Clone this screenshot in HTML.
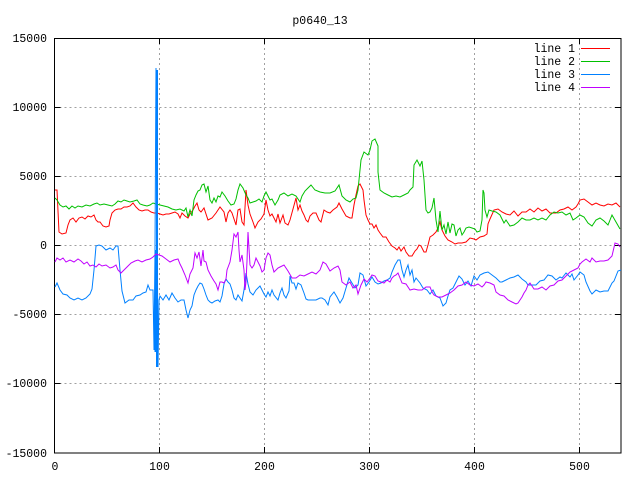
<!DOCTYPE html>
<html><head><style>
html,body{margin:0;padding:0;background:#fff;}
svg{display:block;}
text{font-family:"Liberation Mono","DejaVu Sans Mono",monospace;font-size:11.5px;fill:#000;}
</style></head><body>
<svg width="640" height="480" viewBox="0 0 640 480" xmlns="http://www.w3.org/2000/svg">
<rect width="640" height="480" fill="#fff"/>
<g stroke="#a0a0a0" stroke-width="1" stroke-dasharray="2,3" fill="none">
<path d="M54.5 107.5H621M54.5 176.5H621M54.5 245.5H621M54.5 314.5H621M54.5 383.5H621"/>
<path d="M159.5 38V453M264.5 38V453M369.5 38V453M474.5 38V453M579.5 38V453"/>
</g>
<g stroke="#000" stroke-width="1" fill="none">
<rect x="54.5" y="38.5" width="566.5" height="414.5"/>
<path d="M54.5 107.5h6M54.5 176.5h6M54.5 245.5h6M54.5 314.5h6M54.5 383.5h6M621 107.5h-6M621 176.5h-6M621 245.5h-6M621 314.5h-6M621 383.5h-6"/>
<path d="M159.5 453v-6M264.5 453v-6M369.5 453v-6M474.5 453v-6M579.5 453v-6M159.5 38v6M264.5 38v6M369.5 38v6M474.5 38v6M579.5 38v6"/>
</g>
<text x="320" y="24" text-anchor="middle">p0640_13</text>
<g text-anchor="end">
<text x="47" y="42">15000</text>
<text x="47" y="111">10000</text>
<text x="47" y="180">5000</text>
<text x="47" y="249">0</text>
<text x="47" y="318">-5000</text>
<text x="47" y="387">-10000</text>
<text x="47" y="457">-15000</text>
</g>
<g text-anchor="middle">
<text x="55" y="470">0</text>
<text x="159.5" y="470">100</text>
<text x="264.5" y="470">200</text>
<text x="369.5" y="470">300</text>
<text x="474.5" y="470">400</text>
<text x="579.5" y="470">500</text>
</g>
<g text-anchor="end">
<text x="575" y="52">line 1</text>
<text x="575" y="65">line 2</text>
<text x="575" y="78">line 3</text>
<text x="575" y="91">line 4</text>
</g>
<path d="M581 48.5h29" stroke="#ff0000"/>
<path d="M581 61.5h29" stroke="#00c000"/>
<path d="M581 74.5h29" stroke="#0080ff"/>
<path d="M581 87.5h29" stroke="#c000ff"/>
<g fill="none" stroke-width="1">
<polyline stroke="#ff0000" points="55,190 57,190 59,232 62,234 66,233 68,225 70,220 73,218 76,222 79,218 82,217 85,219 88,216 91,217 94,215 96,220 98,222 100,222 103,226 106,227 109,226 110,220 112,213 115,210 118,209 121,209 124,207 127,207 130,206 133,203 136,207 139,210 142,211 145,210 148,210 151,212 154,213 157,213 160,214 163,215 166,214 169,214 172,213 175,212 178,214 180,218 182,213 185,216 188,218 190,214 193,210 195,206 197,203 199,210 201,212 204,208 208,220 212,218 216,213 220,207 224,212 226,222 228,213 230,210 232,213 236,225 238,210 240,209 242,222 244,225 246,190 248,205 250,214 253,222 255,228 258,222 261,219 264,214 266,200 268,210 270,216 272,214 274,218 276,222 278,214 280,223 283,215 285,223 288,225 290,220 293,209 296,198 298,210 300,205 302,211 304,215 306,220 308,222 310,216 313,213 316,213 319,220 321,222 324,210 327,212 330,213 333,210 337,207 339,203 342,209 346,216 350,218 352,218 354,205 356,195 358,186 360,184 363,190 364,200 366,215 368,220 370,224 372,224 374,228 376,225 378,230 380,233 383,237 386,237 389,242 392,246 395,248 397,250 399,247 401,251 404,247 406,252 409,256 412,256 415,251 417,249 419,245 421,246 424,252 426,252 428,245 430,237 433,235 436,232 438,228 440,222 442,230 445,236 448,240 452,242 455,244 458,243 462,243 466,242 470,238 474,239 476,240 480,237 484,236 487,234 488,224 490,219 494,210 498,209 502,212 506,214 510,215 514,211 518,216 522,212 526,212 530,209 534,212 538,208 542,211 546,209 550,213 554,213 556,213 560,210 564,209 568,207 572,210 576,207 578,204 580,200 584,199 588,202 592,205 596,203 600,205 604,206 608,204 612,205 616,203 620,207"/>
<polyline stroke="#00c000" points="55,198 57,200 60,205 63,207 66,206 69,209 72,206 75,208 78,206 82,207 86,205 90,206 94,204 97,203 100,205 104,204 108,205 112,206 115,204 118,201 121,202 124,200 127,201 130,202 134,201 137,200 140,204 143,205 147,206 150,205 153,203 156,204 160,205 164,206 168,207 172,209 176,210 180,209 184,211 186,208 188,217 190,210 192,216 194,200 196,195 198,191 200,190 202,185 204,184 206,192 208,186 210,200 212,203 214,198 216,202 218,196 220,197 222,192 225,196 228,201 231,205 234,204 236,199 238,190 240,184 243,188 246,195 248,198 250,203 253,202 256,201 259,199 262,202 264,196 266,192 268,196 270,200 272,199 275,205 278,200 280,195 284,193 288,196 292,194 296,196 300,202 302,196 305,191 308,188 311,185 315,190 320,192 325,193 330,193 335,191 339,185 342,196 346,200 350,202 353,199 356,198 358,190 361,160 364,152 368,155 370,150 372,141 375,139 378,146 378,172 380,190 384,193 388,195 392,197 396,196 400,197 404,195 408,193 410,190 413,187 414,165 417,160 420,166 422,161 424,180 426,210 428,213 430,212 432,208 434,198 436,220 438,232 440,211 442,230 444,225 446,234 448,222 450,233 452,224 454,225 456,236 458,230 460,228 462,235 464,232 466,228 469,227 472,228 475,229 477,232 480,231 482,220 483,190 484,193 485,210 487,217 489,210 492,211 496,212 500,215 502,219 504,223 506,220 510,226 514,225 518,222 522,218 526,220 530,220 534,218 538,220 542,218 546,220 550,215 554,212 558,213 562,212 566,215 570,213 573,220 576,218 580,215 584,217 588,223 592,226 596,220 600,218 604,221 608,225 612,215 616,222 620,229"/>
<polyline stroke="#0080ff" points="55,287 57,283 60,290 63,294 67,295 70,298 74,300 78,298 82,300 86,298 90,294 92,289 94,270 96,246 99,245 102,246 106,250 110,248 113,250 116,246 118,246 120,270 122,291 125,303 129,300 133,300 136,296 140,295 143,293 146,292 148,285 150,290 153,290 154,350 155,250 156,68 157,200 158,367 159,300 160,296 163,300 166,295 169,300 172,293 175,298 178,302 181,300 184,300 186,310 188,318 190,310 192,306 194,295 196,290 198,286 200,283 202,284 204,289 206,295 208,300 210,302 212,303 215,301 218,300 220,302 222,296 224,284 226,279 228,282 230,284 232,290 234,298 236,300 238,295 240,298 242,301 244,290 246,273 248,284 250,292 253,295 256,290 258,288 260,286 262,290 264,294 266,297 268,292 270,296 272,290 274,295 278,300 280,293 282,288 284,295 286,298 289,291 290,276 292,283 294,283 296,289 298,283 301,285 304,293 306,299 308,300 312,300 316,300 320,298 322,298 325,300 328,305 330,297 334,292 337,297 340,303 343,298 346,288 349,278 352,283 355,288 358,285 360,273 363,275 366,286 369,282 372,277 375,282 378,284 381,283 384,281 387,280 390,278 392,272 395,265 398,260 400,260 402,270 404,277 406,270 408,265 410,275 412,270 414,282 416,278 420,283 423,288 427,290 430,294 433,290 436,296 440,298 443,306 446,303 448,296 450,290 453,288 456,282 459,276 462,279 465,285 468,281 471,286 474,276 477,280 480,275 484,273 488,272 492,275 496,278 500,282 502,282 506,280 510,278 514,277 518,275 522,279 526,282 528,285 532,285 536,285 540,281 544,280 548,275 552,276 556,280 560,277 562,278 566,273 570,277 572,274 574,280 578,275 580,272 584,275 586,282 590,291 592,294 596,290 600,292 604,291 608,291 612,283 614,281 618,271 621,270"/>
<path stroke="#0080ff" stroke-width="2" d="M155.5 250V352M157 70V367"/>
<polyline stroke="#c000ff" points="55,262 57,258 60,260 63,258 66,262 70,260 74,262 78,259 81,261 84,264 87,262 90,266 93,265 96,267 99,264 102,266 106,265 110,268 113,267 116,265 118,270 121,273 124,270 128,266 131,263 135,261 138,260 142,262 146,260 150,259 153,257 156,254 159,255 162,256 166,259 170,262 174,260 178,259 180,264 182,268 185,275 188,283 190,274 193,268 195,253 197,258 199,252 201,266 203,250 204,261 206,262 208,270 211,276 214,281 216,284 218,290 220,282 222,282 224,283 226,279 227,270 230,262 232,250 234,234 236,237 238,232 239,250 240,262 242,255 244,270 245,290 246,282 247,261 248,232 250,265 252,268 254,265 256,258 258,262 260,266 262,272 264,270 266,258 268,253 270,255 272,265 274,272 276,270 278,268 280,267 284,265 288,271 292,278 296,278 300,275 304,276 308,274 312,272 316,274 320,270 323,262 326,264 330,271 334,268 338,266 340,270 342,282 346,285 350,282 353,288 356,285 358,294 361,285 364,279 367,282 370,278 372,275 375,276 378,281 381,282 384,283 387,280 390,282 392,278 394,276 396,275 398,273 402,283 406,284 410,290 414,289 418,290 422,290 426,287 430,287 432,292 434,295 438,297 442,297 446,295 450,293 454,290 458,286 462,285 466,282 470,285 474,286 478,284 482,287 484,285 486,282 490,283 494,285 496,292 500,295 504,296 508,300 512,302 516,304 518,303 520,300 522,297 524,293 526,290 528,285 530,283 534,289 538,289 542,287 546,290 550,286 554,285 558,281 562,280 566,276 570,272 574,270 578,268 580,264 582,262 586,259 590,262 592,258 596,262 600,261 604,261 608,260 612,256 615,243 618,244 620,247"/>
</g>
</svg>
</body></html>
